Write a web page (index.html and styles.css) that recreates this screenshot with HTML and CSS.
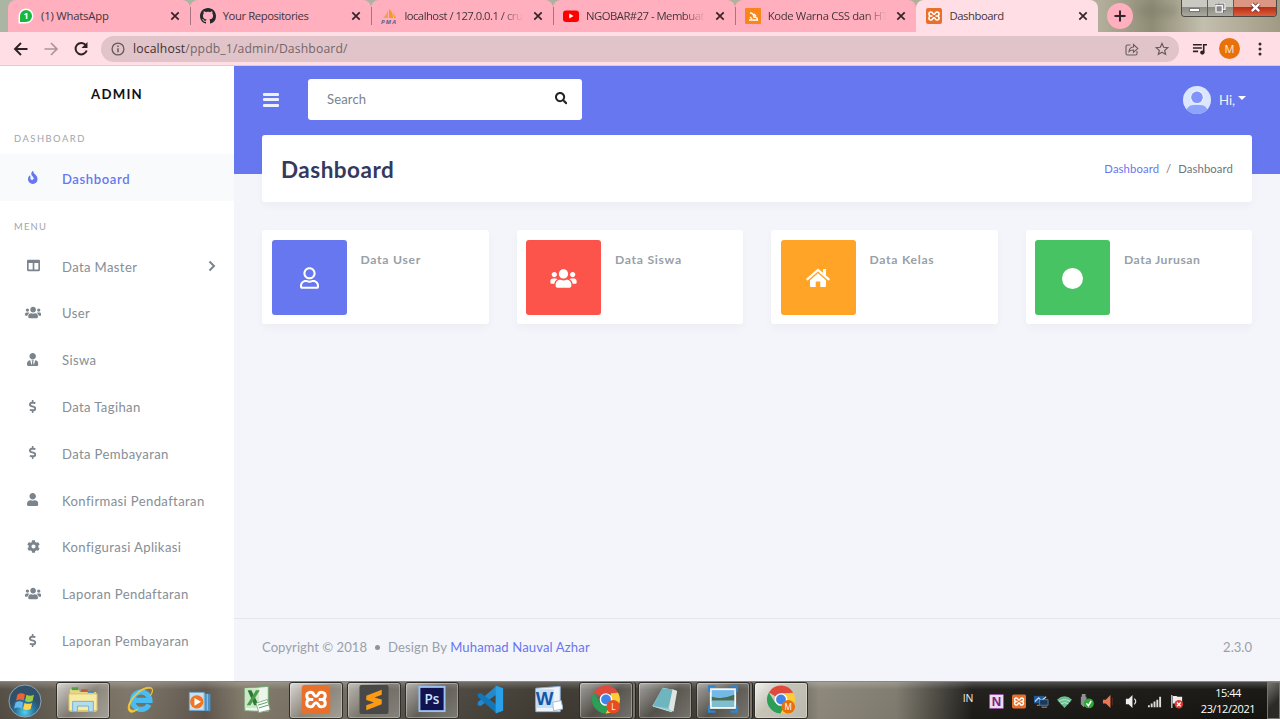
FILE: index.html
```html
<!DOCTYPE html>
<html lang="id">
<head>
<meta charset="utf-8">
<title>Dashboard</title>
<link rel="stylesheet" href="styles.css">
</head>
<body>
<svg class="defs" aria-hidden="true">
  <symbol id="user" viewBox="0 0 448 512"><path d="M224 256c70.7 0 128-57.3 128-128S294.7 0 224 0 96 57.3 96 128s57.3 128 128 128zm89.6 32h-16.7c-22.2 10.2-46.9 16-72.9 16s-50.6-5.8-72.9-16h-16.7C60.2 288 0 348.2 0 422.4V464c0 26.5 21.5 48 48 48h352c26.5 0 48-21.5 48-48v-41.6c0-74.2-60.2-134.4-134.4-134.4z"/></symbol>
  <symbol id="user-tie" viewBox="0 0 448 512"><path d="M224 256c70.700 0 128-57.300 128-128S294.700 0 224 0 96 57.300 96 128s57.300 128 128 128zm95.800 32.600L272 480l-32-136 32-56h-96l32 56-32 136-47.800-191.400C56.900 292 0 350.300 0 422.400V464c0 26.500 21.500 48 48 48h352c26.500 0 48-21.500 48-48v-41.600c0-72.100-56.900-130.400-128.200-133.800z"/></symbol>
  <symbol id="user-line" viewBox="0 0 448 512"><path d="M313.600 304c-28.700 0-42.500 16-89.600 16-47.100 0-60.800-16-89.600-16C60.200 304 0 364.200 0 438.400V464c0 26.500 21.500 48 48 48h352c26.500 0 48-21.500 48-48v-25.600c0-74.200-60.200-134.400-134.400-134.400zM400 464H48v-25.600c0-47.600 38.800-86.400 86.400-86.400 14.600 0 38.300 16 89.600 16 51.700 0 74.900-16 89.600-16 47.600 0 86.400 38.800 86.400 86.400V464zM224 288c79.500 0 144-64.500 144-144S303.500 0 224 0 80 64.500 80 144s64.500 144 144 144zm0-240c52.900 0 96 43.100 96 96s-43.100 96-96 96-96-43.100-96-96 43.100-96 96-96z"/></symbol>
  <symbol id="users" viewBox="0 0 640 512"><path d="M96 224c35.300 0 64-28.700 64-64s-28.700-64-64-64-64 28.700-64 64 28.700 64 64 64zm448 0c35.300 0 64-28.700 64-64s-28.700-64-64-64-64 28.700-64 64 28.700 64 64 64zm32 32h-64c-17.600 0-33.500 7.100-45.100 18.600 40.300 22.100 68.900 62 75.100 109.400h66c17.700 0 32-14.300 32-32v-32c0-35.300-28.700-64-64-64zm-256 0c61.900 0 112-50.100 112-112S381.900 32 320 32 208 82.100 208 144s50.100 112 112 112zm76.800 32h-8.300c-20.800 10-43.900 16-68.500 16s-47.600-6-68.500-16h-8.300C179.600 288 128 339.600 128 403.200V432c0 26.500 21.500 48 48 48h288c26.500 0 48-21.500 48-48v-28.800c0-63.600-51.600-115.200-115.200-115.200zm-223.700-13.400C161.500 263.100 145.600 256 128 256H64c-35.300 0-64 28.700-64 64v32c0 17.700 14.300 32 32 32h65.900c6.300-47.400 34.900-87.300 75.200-109.400z"/></symbol>
  <symbol id="cog" viewBox="0 0 512 512"><path d="M487.400 315.700l-42.600-24.600c4.300-23.200 4.300-47 0-70.200l42.600-24.600c4.900-2.800 7.100-8.600 5.500-14-11.100-35.600-30-67.800-54.700-94.600-3.800-4.100-10-5.100-14.800-2.300L380.800 110c-17.900-15.400-38.500-27.300-60.800-35.100V25.800c0-5.600-3.900-10.500-9.400-11.700-36.700-8.200-74.300-7.800-109.200 0-5.500 1.200-9.400 6.100-9.400 11.700V75c-22.200 7.900-42.800 19.800-60.800 35.100L88.700 85.500c-4.900-2.800-11-1.900-14.800 2.300-24.700 26.700-43.600 58.900-54.700 94.600-1.700 5.400.6 11.200 5.500 14L67.300 221c-4.300 23.200-4.300 47 0 70.200l-42.600 24.600c-4.900 2.800-7.100 8.600-5.500 14 11.100 35.600 30 67.800 54.700 94.600 3.800 4.100 10 5.100 14.800 2.300l42.600-24.600c17.900 15.400 38.500 27.300 60.800 35.100v49.200c0 5.600 3.900 10.500 9.400 11.700 36.700 8.200 74.300 7.800 109.200 0 5.500-1.200 9.400-6.100 9.400-11.700v-49.200c22.200-7.900 42.800-19.800 60.800-35.100l42.600 24.600c4.900 2.800 11 1.900 14.800-2.300 24.700-26.700 43.600-58.900 54.700-94.600 1.500-5.500-.7-11.300-5.600-14.100zM256 336c-44.100 0-80-35.900-80-80s35.900-80 80-80 80 35.900 80 80-35.900 80-80 80z"/></symbol>
  <symbol id="dollar" viewBox="0 0 288 512"><path d="M209.200 233.400l-108-31.600C88.700 198.200 80 186.500 80 173.500c0-16.300 13.200-29.500 29.500-29.500h66.300c12.200 0 24.200 3.700 34.200 10.500 6.100 4.100 14.300 3.100 19.500-2l34.800-34c7.100-6.900 6.100-18.400-1.800-24.500C238 74.800 207.400 64.100 176 64V16c0-8.800-7.200-16-16-16h-32c-8.800 0-16 7.200-16 16v48h-2.500C45.800 64-5.400 118.700.5 183.600c4.200 46.100 39.400 83.600 83.800 96.600l102.500 30c12.500 3.700 21.200 15.300 21.200 28.300 0 16.300-13.200 29.500-29.500 29.500h-66.300C100 368 88 364.300 78 357.500c-6.100-4.100-14.300-3.100-19.500 2l-34.800 34c-7.100 6.900-6.100 18.400 1.800 24.500 24.500 19.200 55.100 29.900 86.500 30v48c0 8.800 7.200 16 16 16h32c8.800 0 16-7.200 16-16v-48.200c46.600-.9 90.300-28.600 105.700-72.700 21.500-61.600-14.600-124.800-72.500-141.700z"/></symbol>
  <symbol id="fire" viewBox="0 0 384 512"><path d="M216 23.860c0-23.800-30.650-32.770-44.150-13.040C48 191.850 224 200 224 288c0 35.630-29.110 64.460-64.850 63.990-35.170-.45-63.150-29.770-63.150-64.940v-85.510c0-21.700-26.470-32.230-41.430-16.500C27.800 213.160 0 261.330 0 320c0 105.870 86.130 192 192 192s192-86.130 192-192c0-170.290-168-193-168-296.140z"/></symbol>
  <symbol id="columns" viewBox="0 0 512 512"><path d="M464 32H48C21.490 32 0 53.490 0 80v352c0 26.510 21.490 48 48 48h416c26.510 0 48-21.490 48-48V80c0-26.510-21.490-48-48-48zM224 416H64V160h160v256zm224 0H288V160h160v256z"/></symbol>
  <symbol id="search" viewBox="0 0 512 512"><path d="M505 442.700L405.300 343c-4.500-4.500-10.600-7-17-7H372c27.600-35.300 44-79.700 44-128C416 93.100 322.900 0 208 0S0 93.100 0 208s93.100 208 208 208c48.300 0 92.700-16.400 128-44v16.300c0 6.400 2.500 12.500 7 17l99.700 99.700c9.400 9.400 24.600 9.400 33.900 0l28.300-28.300c9.400-9.400 9.400-24.600.1-34zM208 336c-70.700 0-128-57.200-128-128 0-70.700 57.200-128 128-128 70.700 0 128 57.200 128 128 0 70.700-57.200 128-128 128z"/></symbol>
  <symbol id="close" viewBox="0 0 10 10"><path d="M1.300 1.300l7.400 7.400M8.700 1.300L1.300 8.700" fill="none" stroke="#33232a" stroke-width="1.700"/></symbol>
  <symbol id="xampp" viewBox="0 0 32 32"><rect width="32" height="32" rx="4" fill="#e8702a"/><path d="M13 16H9.500A4 4 0 1 1 13.500 10.500Q16 14.500 18.500 10.500A4 4 0 1 1 22.500 16H19M9.500 16A4 4 0 1 0 13.500 21.500Q16 17.500 18.500 21.500A4 4 0 1 0 22.500 16" fill="none" stroke="#fff" stroke-width="3.300" stroke-linejoin="round"/></symbol>
  <symbol id="chrome" viewBox="0 0 32 32"><path d="M16 16L2.600 8.200A15.500 15.500 0 0 1 29.400 8.200L29 9H16z" fill="#df4a3c"/><path d="M2.600 8.200A15.500 15.500 0 0 0 15.500 31.500L22 20 16 16 9.500 19.500z" fill="#2b9f55"/><path d="M29.400 8.500A15.500 15.500 0 0 1 15.500 31.500L22.300 19.500 21 9z" fill="#fbcd36"/><circle cx="16" cy="16" r="7" fill="#fff"/><circle cx="16" cy="16" r="5.400" fill="#4285e8"/></symbol>
</svg>

<header class="browser">
  <div class="tabstrip">
    <div class="tab">
      <svg class="fav" viewBox="0 0 16 16"><path d="M.5 15.500V8A7.500 7.500 0 1 1 8 15.500z" fill="#fff"/><path d="M2 14V8a6 6 0 1 1 6 6z" fill="#17b83c"/><text x="8" y="11.200" text-anchor="middle" class="fav-num">1</text></svg>
      <span class="tab-title t-wa">(1) WhatsApp</span><svg class="x"><use href="#close"/></svg>
    </div>
    <div class="tab">
      <svg class="fav" viewBox="0 0 16 16"><path fill="#24292e" d="M8 0C3.580 0 0 3.580 0 8c0 3.540 2.290 6.530 5.470 7.590.4.070.55-.17.55-.38 0-.19-.01-.82-.01-1.490-2.010.37-2.530-.49-2.690-.94-.09-.23-.48-.94-.82-1.130-.28-.15-.68-.52-.01-.53.630-.01 1.080.58 1.230.82.720 1.210 1.870.87 2.330.66.070-.52.280-.87.510-1.070-1.780-.2-3.640-.89-3.640-3.950 0-.87.310-1.590.82-2.150-.08-.2-.36-1.020.08-2.120 0 0 .67-.21 2.200.82.640-.18 1.320-.27 2-.27s1.360.09 2 .27c1.530-1.040 2.200-.82 2.200-.82.440 1.100.16 1.920.08 2.120.51.560.82 1.270.82 2.150 0 3.070-1.870 3.750-3.650 3.950.29.250.54.730.54 1.480 0 1.070-.01 1.930-.01 2.200 0 .21.150.46.550.38A8.010 8.010 0 0 0 16 8c0-4.420-3.580-8-8-8z"/></svg>
      <span class="tab-title t-gh">Your Repositories</span><svg class="x"><use href="#close"/></svg>
    </div>
    <div class="tab">
      <svg class="fav" viewBox="0 0 16 16"><path d="M7 2v8H2c2-2 4-4 5-8z" fill="#e9a25e"/><path d="M8 1c3 2 4 5 4 9H8zM12 4l3 6h-2z" fill="#f79a22"/><text x="0" y="15.500" class="fav-pma" textLength="15">PMA</text></svg>
      <span class="tab-title t-pma fade">localhost / 127.0.0.1 / cru</span><svg class="x"><use href="#close"/></svg>
    </div>
    <div class="tab">
      <svg class="fav" viewBox="0 0 16 16"><rect y="2.500" width="16" height="11.500" rx="3" fill="#f00"/><path d="M6.300 5.500v5l4.200-2.500z" fill="#fff"/></svg>
      <span class="tab-title t-yt fade">NGOBAR#27 - Membuat</span><svg class="x"><use href="#close"/></svg>
    </div>
    <div class="tab">
      <svg class="fav" viewBox="0 0 16 16"><rect width="16" height="16" rx="1" fill="#f9861b"/><path d="M4 12h8.500c0-2-1-3-3-3M5 9l2 2M5 5c3 0 4 2 4 5M9 6l2 2" fill="none" stroke="#fff" stroke-width="1.300"/></svg>
      <span class="tab-title t-kode fade">Kode Warna CSS dan HT</span><svg class="x"><use href="#close"/></svg>
    </div>
    <div class="tab active">
      <svg class="fav"><use href="#xampp"/></svg>
      <span class="tab-title t-dash">Dashboard</span><svg class="x"><use href="#close"/></svg>
    </div>
    <div class="newtab"><svg viewBox="0 0 26 26"><path d="M13 7.500v11M7.500 13h11" stroke="#30252a" stroke-width="2"/></svg></div>
    <div class="ghost"></div>
    <div class="winbtns">
      <div class="wb min"><i></i></div>
      <div class="wb"><svg viewBox="0 0 12 12"><path d="M4 1h7v7H9M1 4h7v7H1z" fill="#777" stroke="#555" stroke-width="2.800"/><path d="M4 1h7v7H9M1 4h7v7H1z" fill="#888" stroke="#f8f8f8" stroke-width="1.500"/></svg></div>
      <div class="wb red"><svg viewBox="0 0 12 12"><path d="M2 2l8 8M10 2l-8 8" stroke="#703030" stroke-width="4.400"/><path d="M2 2l8 8M10 2l-8 8" stroke="#fff" stroke-width="2.600"/></svg></div>
    </div>
  </div>
  <div class="toolbar">
    <svg class="nav" viewBox="0 0 16 16"><path d="M14.500 8H2M8 2L2 8l6 6" fill="none" stroke="#2c2226" stroke-width="1.900"/></svg>
    <svg class="nav" viewBox="0 0 16 16"><path d="M1.500 8H14M8 2l6 6-6 6" fill="none" stroke="#ab969b" stroke-width="1.700"/></svg>
    <svg class="nav" viewBox="0 0 16 16"><path d="M12.800 4.200A5.700 5.700 0 1 0 13.700 9.500" fill="none" stroke="#2c2226" stroke-width="2"/><path d="M14.500 1v6h-6z" fill="#2c2226"/></svg>
    <div class="omnibox">
      <svg class="info" viewBox="0 0 14 14"><circle cx="7" cy="7" r="5.900" fill="none" stroke="#66585d" stroke-width="1.300"/><path d="M7 6.200v4M7 3.500v1.500" stroke="#66585d" stroke-width="1.500"/></svg>
      <span class="url"><b>localhost</b>/ppdb_1/admin/Dashboard/</span>
      <svg class="oi" viewBox="0 0 14 14"><path d="M5.500 3H2.500Q1 3 1 4.500v7Q1 13 2.500 13h8q1.500 0 1.500-1.500V9M4 9.500C4.500 6 6 5 8.500 5V2.500l4.300 4-4.300 3.800V8C6.500 8 5 8.500 4 9.500z" fill="none" stroke="#6b5c61" stroke-width="1.100"/></svg>
      <svg class="oi" viewBox="0 0 14 14"><path d="M7 1.500l1.700 3.800 4.100.4-3.100 2.700.9 4L7 10.300l-3.600 2.100.9-4L1.200 5.700l4.100-.4z" fill="none" stroke="#66585d" stroke-width="1.200"/></svg>
    </div>
    <svg class="media" viewBox="0 0 16 14"><path d="M1 2.500h9.500M1 6h9.500M1 9.500h5.500M12.500 11V2.500H16" fill="none" stroke="#2c2226" stroke-width="1.700"/><circle cx="11" cy="10.800" r="2.300" fill="#2c2226"/></svg>
    <div class="profile">M</div>
    <svg class="dots" viewBox="0 0 4 14"><circle cx="2" cy="2" r="1.500"/><circle cx="2" cy="7" r="1.500"/><circle cx="2" cy="12" r="1.500"/></svg>
  </div>
</header>

<div class="app">
  <aside class="sidebar">
    <div class="brand">ADMIN</div>
    <div class="head">DASHBOARD</div>
    <a class="item on"><svg class="fire"><use href="#fire"/></svg><span>Dashboard</span></a>
    <div class="head second">MENU</div>
    <a class="item"><svg class="square"><use href="#columns"/></svg><span>Data Master</span><svg class="chev" viewBox="0 0 8 12"><path d="M1.500 1.500L6 6l-4.500 4.500" fill="none" stroke="#7b848c" stroke-width="2"/></svg></a>
    <a class="item"><svg class="wide"><use href="#users"/></svg><span>User</span></a>
    <a class="item"><svg class="person"><use href="#user-tie"/></svg><span>Siswa</span></a>
    <a class="item"><svg class="thin"><use href="#dollar"/></svg><span>Data Tagihan</span></a>
    <a class="item"><svg class="thin"><use href="#dollar"/></svg><span>Data Pembayaran</span></a>
    <a class="item"><svg class="person"><use href="#user"/></svg><span>Konfirmasi Pendaftaran</span></a>
    <a class="item"><svg class="square"><use href="#cog"/></svg><span>Konfigurasi Aplikasi</span></a>
    <a class="item"><svg class="wide"><use href="#users"/></svg><span>Laporan Pendaftaran</span></a>
    <a class="item"><svg class="thin"><use href="#dollar"/></svg><span>Laporan Pembayaran</span></a>
  </aside>
  <main class="main">
    <nav class="topnav">
      <div class="bars"><i></i><i></i><i></i></div>
      <div class="search"><span>Search</span><svg><use href="#search"/></svg></div>
      <div class="account">
        <svg class="avatar" viewBox="0 0 28 28"><defs><clipPath id="round"><circle cx="14" cy="14" r="14"/></clipPath></defs><g clip-path="url(#round)"><rect width="28" height="28" fill="#dce7fd"/><path d="M3 28c0-6 3-9 8-9h6c5 0 8 3 8 9z" fill="#8ea3fb"/></g><circle cx="14" cy="11.300" r="6.800" fill="#eaf1ff"/><circle cx="14" cy="11.300" r="5.800" fill="#8194fa"/></svg>
        <span>Hi,</span><i class="caret"></i>
      </div>
    </nav>
    <section class="title-card">
      <h1>Dashboard</h1>
      <div class="crumbs"><a>Dashboard</a><span class="slash">/</span><span>Dashboard</span></div>
    </section>
    <section class="stats">
      <div class="stat"><div class="tile blue"><svg class="i-user"><use href="#user-line"/></svg></div><h4>Data User</h4></div>
      <div class="stat"><div class="tile red"><svg class="i-users"><use href="#users"/></svg></div><h4>Data Siswa</h4></div>
      <div class="stat"><div class="tile orange"><svg class="i-home" viewBox="0 0 24 20"><path d="M1.500 11.200L12 2l10.500 9.200" fill="none" stroke="#fff" stroke-width="2.300" stroke-linecap="round"/><path d="M12 5.300l8 7V18q0 1-1 1h-4.700v-5.500H9.700V19H5q-1 0-1-1v-5.700zM17 1h3v7.500l-3-2.600z" fill="#fff"/></svg></div><h4>Data Kelas</h4></div>
      <div class="stat"><div class="tile green"><i class="disc"></i></div><h4 class="jur">Data Jurusan</h4></div>
    </section>
    <footer class="foot"><span class="copy">Copyright © 2018</span><i class="bullet"></i><span class="by">Design By <a>Muhamad Nauval Azhar</a></span><span class="ver">2.3.0</span></footer>
  </main>
</div>

<div class="taskbar">
  <svg class="start" viewBox="0 0 36 36"><defs><radialGradient id="orb" cx=".5" cy=".85"><stop offset="0" stop-color="#54d2ed"/><stop offset=".6" stop-color="#28749f"/><stop offset="1" stop-color="#315069"/></radialGradient></defs><circle cx="18" cy="18" r="17" fill="url(#orb)" stroke="#92aab4"/><path d="M10 11q4-2.500 8 0l-1.500 6.500q-4-2-8 0z" fill="#ee6334"/><path d="M19.500 11.500q4 2 8 0L26 18q-4 2-8 0z" fill="#9bcc45"/><path d="M8 19.500q4-2.500 8 0L14.500 26q-4-2-8 0z" fill="#65b9ef"/><path d="M17.500 20q4 2 8 0L24 26.500q-4 2-8 0z" fill="#ffd34c"/></svg>
  <div class="apps">
    <div class="slot open lit"><svg viewBox="0 0 32 30"><path d="M2 4h9l2 3h17v21H2z" fill="#ead681"/><path d="M4 2h7v3H4z" fill="#4f9e48"/><path d="M14 4h7v3h-7z" fill="#c8583f"/><path d="M21 6h7v2h-7z" fill="#408fc7"/><path d="M1 9h30v18H1z" fill="#f6eaa5" stroke="#d3bd69"/><path d="M5 17h22v11h-5v-6H10v6H5z" fill="#b4dcef" stroke="#69b1d4"/></svg></div>
    <div class="slot"><svg viewBox="0 0 32 30"><path d="M24.500 20.500A9.300 9.300 0 1 1 25.500 16H9" fill="none" stroke="#49bdf1" stroke-width="5.500"/><path d="M4 28C-3 21 14 1 25 2c5 0 3 6 1 9 5-8 1-8-2-8C13 4 0 21 5 26q3 2 8-1-6 5-9 3z" fill="#f8cb38" stroke="#f2c336"/></svg></div>
    <div class="slot"><svg class="small" viewBox="0 0 32 30"><path d="M10 4l20 2v22l-20-1z" fill="#4e91c5"/><path d="M26 6v21M22 6v21" stroke="#a7d7f2"/><path d="M3 4h19v23H3z" fill="#cadfea" stroke="#6da8cf"/><circle cx="12.500" cy="16" r="8.500" fill="#ef7525"/><path d="M9.500 11v10l8.500-5z" fill="#fff"/></svg></div>
    <div class="slot"><svg viewBox="0 0 32 30"><path d="M3 3l25-2v27L3 27z" fill="#ecf5e9" stroke="#70aa72"/><path d="M3 3h15v21H3z" fill="#cce7c5"/><path d="M6 5h4l8 16h-5z" fill="#287a35"/><path d="M15 5h4L9 21H5z" fill="#4a9b4c"/><path d="M15 19l12-4 3 11-12 3z" fill="#fff" stroke="#83ad83"/><path d="M17 21l10-3M18 24l10-3" stroke="#4c9d57"/></svg></div>
    <div class="slot open lit"><svg viewBox="0 0 30 30"><use href="#xampp" width="30" height="30"/></svg></div>
    <div class="slot open"><svg viewBox="0 0 30 30"><rect width="30" height="30" rx="2" fill="#484848"/><path d="M7 11l16-6v5l-7.500 3L23 15v5L7 26v-5l8-3-8-2.500z" fill="#fb9a15"/></svg></div>
    <div class="slot open"><svg viewBox="0 0 30 30"><rect x="2" y="2" width="26" height="25" fill="#10134f" stroke="#9bc1f3" stroke-width="2"/><text x="15" y="19.500" text-anchor="middle" class="ps">Ps</text></svg></div>
    <div class="slot"><svg viewBox="0 0 32 30"><path d="M22 1L3 18v3l3 1L25 8z" fill="#2489ca"/><path d="M22 29L3 12V9l3-1L25 22z" fill="#1576b7"/><path d="M22 0l8 3v24l-8 3z" fill="#2aa0e8"/></svg></div>
    <div class="slot"><svg viewBox="0 0 32 30"><path d="M3 3l26-2v27H3z" fill="#edf3fb" stroke="#90b5df"/><path d="M3 4h19v20H3z" fill="#c8def4"/><text x="3" y="21" class="word">W</text><path d="M21 18l9-2 2 9-10 2z" fill="#fff" stroke="#9ab6d8"/></svg></div>
    <div class="slot open stack"><svg viewBox="0 0 32 32"><use href="#chrome" width="32" height="32"/><circle cx="24" cy="24" r="7.500" fill="#e94b25"/><text x="24" y="27.500" text-anchor="middle" class="cb">L</text></svg></div>
    <div class="slot open"><svg viewBox="0 0 32 30"><path d="M14 3l14 3-5 22-20-6z" fill="#8dc9cf" stroke="#cce7e8"/><path d="M13 3l12 1-6 20L3 22z" fill="#6fb5c0"/><path d="M24 4l5 2-4 22-5-3z" fill="#dfe6e2"/></svg></div>
    <div class="slot open stack"><svg viewBox="0 0 32 30"><path d="M2 3h28v22H2z" fill="#f3f9fa"/><path d="M4 5h24v8H4z" fill="#72b9e8"/><path d="M4 12q12 3 24-2v7H4z" fill="#486d51"/><path d="M4 16h24v7H4z" fill="#7fbdcf"/><path d="M1 7V1h7M24 1h7v6M1 21v7h7M24 28h7v-7" fill="none" stroke="#2e86cc" stroke-width="2.500"/></svg></div>
    <div class="slot open current"><svg viewBox="0 0 32 32"><use href="#chrome" width="32" height="32"/><circle cx="24" cy="24" r="7.500" fill="#e8710a"/><text x="24" y="27.500" text-anchor="middle" class="cb">M</text></svg></div>
  </div>
  <div class="tray">
    <span class="lang">IN</span>
    <svg viewBox="0 0 16 16"><rect x=".5" y=".5" width="15" height="15" rx="1" fill="#eddaf0" stroke="#9851a5"/><text x="8" y="13" text-anchor="middle" class="one">N</text></svg>
    <svg viewBox="0 0 16 16"><use href="#xampp" width="15" height="16"/></svg>
    <svg viewBox="0 0 16 16"><path d="M0 2h11v8H0z" fill="#1d5a97"/><path d="M1 8l4-4 3 3 5-4" fill="none" stroke="#c7dcec" stroke-width="1.300"/><path d="M6 6h9v6H6z" fill="#16395f" stroke="#7fa3c0" stroke-width=".7"/><path d="M8 14h6M3 12h3" stroke="#aaa"/></svg>
    <svg viewBox="0 0 16 16"><path d="M0 6q8-7 16 0l-8 9z" fill="#68bf91"/><path d="M2 8q6-4 12 0M4 10.500q4-3 8 0" fill="none" stroke="#c7ead5"/></svg>
    <svg viewBox="0 0 16 16"><path d="M3 0h4v3h1v8l-3 3-3-3V3h1z" fill="#8c9291"/><circle cx="10.500" cy="10" r="5.300" fill="#30a63b"/><path d="M8 10l2 2.500 3-5" fill="none" stroke="#fff" stroke-width="1.700"/></svg>
    <svg viewBox="0 0 16 16"><path d="M1 6h3l5-5v14L4 10H1z" fill="#e97755"/><path d="M11 4v8" stroke="#6c2919"/></svg>
    <svg viewBox="0 0 16 16"><path d="M2 5h3l4-4v14l-4-4H2z" fill="#eee"/><path d="M11 5q3 3 0 6" fill="none" stroke="#ddd" stroke-width="1.300"/></svg>
    <svg viewBox="0 0 16 16"><path d="M2 14v-2M5 14v-4M8 14V8M11 14V6M14 14V3" stroke="#ddd" stroke-width="2"/></svg>
    <svg viewBox="0 0 16 16"><path d="M3 1v14" stroke="#ddd" stroke-width="1.300"/><path d="M4 2h4l1 1h5v7H4z" fill="#eee"/><circle cx="10.500" cy="11" r="4.500" fill="#de3735"/><path d="M8.500 9l4 4m0-4l-4 4" stroke="#fff" stroke-width="1.400"/></svg>
  </div>
  <div class="clock"><span>15:44</span><span class="date">23/12/2021</span></div>
  <div class="peek"></div>
</div>
</body>
</html>
```
FILE: styles.css
```css
* { box-sizing: border-box; }
body { margin: 0; width: 1280px; height: 719px; overflow: hidden; display: flex; flex-direction: column; font-family: Lato, "Open Sans", sans-serif; }
svg { display: block; flex: none; }
.defs { position: absolute; width: 0; height: 0; }
a { color: #6777ef; }

.browser { height: 66px; flex: none; font-family: "Open Sans", "Noto Sans", sans-serif; }
.tabstrip { height: 32px; display: flex; padding-left: 8px; background: linear-gradient(90deg, #aab5a3 0, #b3ae9b 86%, #8f8c75 90%, #c3bfae 94%, #a19a83 100%); }
.tab { width: 181.700px; height: 32px; flex: none; display: flex; align-items: center; padding: 0 10px; background: #ffafbe; border-radius: 8px 8px 0 0; position: relative; }
.tab::after { content: ""; position: absolute; right: -1px; top: 7px; width: 1px; height: 18px; background: #a57581; z-index: 1; }
.tab:nth-child(5)::after, .tab.active::after { display: none; }
.tab.active { background: #ffdfe5; }
.fav { width: 16px; height: 16px; margin-right: 7px; }
.fav-num { font: bold 9px "Open Sans", sans-serif; fill: #fff; }
.fav-pma { font: italic bold 6px "Open Sans", sans-serif; fill: #606084; }
.tab-title { flex: 1; min-width: 0; white-space: nowrap; font-size: 11.300px; line-height: 16px; color: #44353a; letter-spacing: -.25px; margin-right: 10px; }
.t-wa { letter-spacing: -.2px; }
.t-gh { letter-spacing: -.42px; }
.t-pma { letter-spacing: -.52px; }
.t-yt { letter-spacing: -.52px; }
.t-kode { letter-spacing: -.36px; }
.t-dash { letter-spacing: -.45px; }
.fade { -webkit-mask-image: linear-gradient(90deg, #000 82%, transparent); mask-image: linear-gradient(90deg, #000 82%, transparent); }
.x { width: 10px; height: 10px; }
.newtab { width: 26px; height: 26px; margin: 3px 0 0 9px; border-radius: 50%; background: #ffafbe; flex: none; }
.ghost { width: 40px; height: 8px; margin: 7px 4px 0 4px; background: #6c6a5c; opacity: .35; filter: blur(4px); }
.winbtns { width: 96px; height: 17px; display: flex; border: 1px solid #4b4944; border-top: 0; border-radius: 0 0 4px 4px; overflow: hidden; }
.wb { width: 26px; display: flex; align-items: center; justify-content: center; border-right: 1px solid #5d5b53; background: linear-gradient(#c9c8c1 0 45%, #8d8c83 46%, #aaa99f); }
.wb svg { width: 11px; height: 11px; margin-top: -2px; }
.wb.min i { width: 11px; height: 4px; margin-top: 3px; background: #fff; border: 1px solid #777; }
.wb.red { flex: 1; border: 0; background: linear-gradient(#dc9684 0 45%, #b92e16 46%, #d9603c); }
.toolbar { height: 34px; display: flex; align-items: center; padding-left: 13px; background: #ffdfe5; border-bottom: 1px solid #dccbd3; }
.nav { width: 16px; height: 16px; margin-right: 14px; }
.omnibox { width: 1078px; height: 26px; margin-left: -2px; border-radius: 13px; background: #e0c4c9; display: flex; align-items: center; padding: 0 10px; }
.info { width: 14px; height: 14px; margin-right: 8px; }
.url { font-size: 12.200px; flex: 1; color: #75666a; letter-spacing: .14px; }
.url b { font-weight: 400; color: #3e3034; }
.oi { width: 14px; height: 14px; margin-left: 16px; }
.media { width: 15px; height: 14px; margin-left: 13px; }
.profile { width: 21px; height: 21px; margin-left: 12px; border-radius: 50%; background: #e8710a; color: #ffe9d8; font-size: 11px; line-height: 21px; text-align: center; }
.dots { width: 4px; height: 14px; margin-left: 18px; fill: #33282c; }

.app { height: 615px; flex: none; display: flex; background: #f4f5fa; }
.sidebar { width: 234px; flex: none; background: #fff; }
.brand { height: 56px; line-height: 56px; text-align: center; font-size: 13.200px; font-weight: 700; letter-spacing: 1.250px; color: #111; }
.head { height: 32px; line-height: 33px; padding-left: 14px; font-size: 9.400px; letter-spacing: 1.500px; color: #a0a5ab; }
.head.second { height: 42px; line-height: 52px; letter-spacing: 1.250px; }
.item { height: 46.800px; display: grid; grid-template-columns: 38px 1fr auto; column-gap: 10px; align-items: center; padding: 0 18px 0 14px; font-size: 13.100px; letter-spacing: .37px; color: #868e96; }
.item > svg:first-child { height: 13px; justify-self: center; fill: #7b848c; margin-top: -1px; }
.item .square { width: 13px; }
.item .wide { width: 16.200px; }
.item .person { width: 11.400px; }
.item .thin { width: 7.300px; }
.item .fire { width: 9.700px; }
.item span { padding-top: 1px; white-space: nowrap; }
.item .chev { width: 8px; height: 12px; margin-top: -1px; }
.item.on { background: #f8fafb; color: #6777ef; font-weight: 600; letter-spacing: .58px; }
.item.on span { padding-top: 3px; }
.item.on > svg:first-child { fill: #6777ef; margin-top: 1px; }

.main { flex: 1; display: flex; flex-direction: column; padding: 0 28px; background: linear-gradient(#6777ef 0 108px, transparent 108px); }
.topnav { height: 69px; display: flex; align-items: center; flex: none; }
.bars { width: 16px; display: grid; row-gap: 2.500px; margin: -2px 29px 0 1px; }
.bars i { height: 3px; border-radius: 1px; background: #edf0ff; }
.search { width: 274px; height: 41px; margin-top: -3px; padding: 0 15px 0 19px; border-radius: 3px; background: #fff; display: flex; align-items: center; justify-content: space-between; font-size: 13.100px; color: #7b838a; letter-spacing: .1px; }
.search svg { width: 12.500px; height: 12.500px; fill: #222; margin-top: -1px; }
.account { margin: -2px 0 0 auto; display: flex; align-items: center; color: #f1f3ff; font-size: 13.100px; padding-right: 6px; }
.avatar { width: 28px; height: 28px; margin-right: 8px; }
.caret { border: 4px solid transparent; border-top-color: #fff; border-bottom: 0; margin: -3px 0 0 3px; }
.title-card { height: 67px; flex: none; background: #fff; border-radius: 3px; padding: 0 19px; display: flex; align-items: center; justify-content: space-between; box-shadow: 0 4px 8px rgba(0,0,0,.03); }
h1 { margin: 3px 0 0; font-size: 22.500px; font-weight: 700; line-height: 28px; letter-spacing: .5px; color: #34395e; }
.crumbs { display: flex; gap: 7px; font-size: 11.300px; letter-spacing: .1px; color: #6c757d; }
.stats { display: grid; grid-template-columns: repeat(4, 1fr); gap: 28px; padding-top: 28px; }
.stat { height: 94px; background: #fff; border-radius: 3px; padding: 9.500px 9.500px; display: flex; box-shadow: 0 4px 8px rgba(0,0,0,.03); }
.tile { width: 75px; height: 75px; border-radius: 3px; display: flex; align-items: center; justify-content: center; margin-right: 14px; }
.tile svg { fill: #fff; margin-top: 2px; }
.i-user { width: 19px; height: 22px; }
.i-users { width: 27px; height: 21px; }
.i-home { width: 24px; height: 20px; }
.blue { background: #6777ef; }
.red { background: #fc544b; }
.orange { background: #ffa426; }
.green { background: #47c363; }
.disc { width: 21px; height: 21px; border-radius: 50%; background: #fff; margin-top: 2px; }
h4 { margin: 11.500px 0 0; font-size: 12.200px; line-height: 17px; font-weight: 700; letter-spacing: .7px; color: #98a0a8; white-space: nowrap; }
.jur { letter-spacing: .5px; }
.foot { height: 63px; margin: auto -28px 0; padding: 0 28px 6px; display: flex; align-items: center; border-top: 1px solid #e3e6ed; font-size: 13.100px; color: #98a0a8; }
.copy { letter-spacing: .03px; }
.by a { letter-spacing: .12px; }
.by { letter-spacing: .1px; }
.bullet { width: 5px; height: 5px; border-radius: 50%; background: #8d949b; margin: 1px 8px 0; }
.ver { margin-left: auto; }

.taskbar { height: 38px; flex: none; display: flex; align-items: center; border-top: 1px solid #898781; background: linear-gradient(rgba(255,255,255,.23), rgba(255,255,255,.03) 20%, transparent), linear-gradient(90deg, #514b42, #7c7466 10%, #5d554c 16%, #807868 19%, #6d675c 28%, #514d45 32%, #3c3830 43%, #444039 60%, #8a8577 64%, #7d796d 70%, #1c1b18 76%, #14130f); font-family: "Open Sans", sans-serif; }
.start { width: 34px; height: 34px; margin: 0 14px 0 8px; }
.apps { width: 752px; display: grid; grid-template-columns: repeat(13, 54px); justify-content: space-between; }
.slot { height: 37px; display: flex; align-items: center; justify-content: center; }
.slot svg { width: 30px; height: 29px; margin-top: -2px; }
.slot .small { width: 25px; height: 24px; margin-top: 1px; }
.open { border: 1px solid #302e29; border-radius: 3px; box-shadow: inset 0 0 0 1px rgba(255,255,255,.3); background: linear-gradient(135deg, rgba(255,255,255,.5), rgba(255,255,255,.1) 50%, rgba(255,255,255,.28)); }
.lit { background: linear-gradient(135deg, rgba(255,255,255,.7), rgba(255,255,255,.15) 50%, rgba(255,255,255,.35)); }
.current { background: linear-gradient(135deg, #f0f0ec, #c6c3b7 40%, #bbb8ae); }
.stack { box-shadow: inset 0 0 0 1px rgba(255,255,255,.3), 2px 0 #77736a, 3px 0 #26231e; }
.ps { font: 600 14px "Open Sans", sans-serif; fill: #cbe2ff; }
.word { font: bold 20px "Liberation Sans", sans-serif; fill: #1557a4; }
.cb { font: 9px "Open Sans", sans-serif; fill: #fff; }
.one { font: bold 14px "Liberation Sans", sans-serif; fill: #78237f; }
.tray { display: flex; align-items: center; margin-left: auto; gap: 7.500px; }
.tray svg { width: 15px; height: 15px; margin-top: 1px; }
.lang { font-size: 10.500px; color: #eee; margin: -5px 8px 0 0; }
.clock { width: 64px; margin-left: 12px; display: flex; flex-direction: column; align-items: center; color: #fff; font-size: 11px; line-height: 16px; letter-spacing: -.5px; white-space: nowrap; }
.date { letter-spacing: -.4px; }
.peek { width: 13px; height: 37px; margin-left: 7px; border: 1px solid #77756e; background: linear-gradient(135deg, #77756f, #2b2a26 60%); }
```
